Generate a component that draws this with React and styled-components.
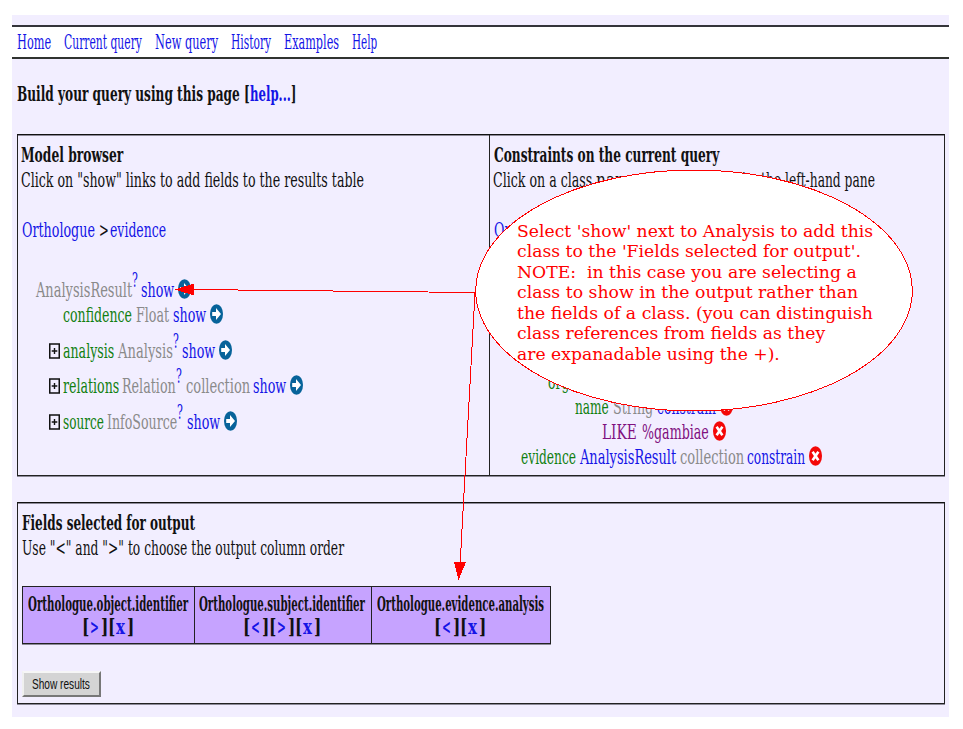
import React, { useLayoutEffect, useRef, useState } from "react";
import styled, { createGlobalStyle } from "styled-components";

const Global = createGlobalStyle`
  * { box-sizing: border-box; }
  html, body { margin: 0; background: #fff; }
  body { width: 963px; height: 729px; overflow: hidden; }
`;

const ink = { link: "#1414e6", green: "#118011", grey: "#8a8a8a", purple: "#80107f", black: "#111" };

const Canvas = styled.div`
  position: relative;
  width: 963px;
  height: 729px;
  overflow: hidden;
  padding: 15px 14px 12px 12px;
  font-family: "DejaVu Serif", serif;
  font-size: 20px;
  line-height: 25px;
  color: ${ink.black};
`;

const Page = styled.main`
  height: 702px;
  padding-top: 10px;
  background: #f2eeff;
`;

const Nav = styled.nav`
  display: flex;
  gap: 13px;
  height: 34px;
  padding: 3px 0 0 5px;
  background: #fff;
  border-top: 2px solid #34343a;
  border-bottom: 2px solid #303330;
`;

const TextBox = styled.span`
  display: block;
  flex: none;
  width: ${(p) => p.$w}px;
  margin-left: ${(p) => p.$ml || 0}px;
  color: ${(p) => ink[p.$tone] || "inherit"};
  white-space: pre;
`;

const Stretch = styled.span`
  display: inline-block;
  transform-origin: 0 50%;
`;

const Heading = styled.h1`
  display: flex;
  height: 25px;
  margin: 23px 0 0 5px;
  font-size: 20px;
  line-height: 25px;
`;

const Panel = styled.section`
  margin: ${(p) => p.$top}px 4px 0 5px;
  height: ${(p) => p.$h}px;
  border: 1px solid #222;
  border-top-color: #111;
  box-shadow: 0 1px 0 #8d8a98, inset 0 1px 0 #8d8a98;
  display: ${(p) => (p.$split ? "grid" : "block")};
  grid-template-columns: 471px 1fr;
`;

const Pane = styled.div`
  padding: 8px 0 0 ${(p) => p.$left || 4}px;
  & + & { border-left: 1px solid #222; }
`;

const Line = styled.div`
  display: flex;
  height: 25px;
  margin-top: ${(p) => p.$top || 0}px;
  padding-left: ${(p) => p.$in || 0}px;
  font-weight: ${(p) => (p.$bold ? 700 : 400)};
`;

const Raised = styled.span`
  transform: translateY(-10px);
`;

const Badge = styled.svg`
  flex: none;
  width: 13px;
  height: 20px;
  margin: 1px 0 0 4px;
`;

const Expander = styled.svg`
  flex: none;
  width: 11px;
  height: 16px;
  margin: 4px 3px 0 0;
`;

const Columns = styled.div`
  display: grid;
  grid-template-columns: 171px 177px 179px;
  width: 529px;
  height: 58px;
  margin-top: 25px;
  background: #c6a3ff;
  border: 1px solid #222;
  box-shadow: 0 1px 0 #8d8a98;
  font-weight: 700;
`;

const Column = styled.div`
  display: flex;
  flex-direction: column;
  align-items: center;
  padding: 5px 2px 0 0;
  line-height: 24px;
  & + & { border-left: 1px solid #222; }
`;

const Controls = styled.div`
  display: flex;
  margin-top: -1px;
`;

const Button = styled.button`
  display: block;
  width: 79px;
  height: 26px;
  margin: 27px 0 0 0;
  padding: 0 0 0 8px;
  text-align: left;
  background: #d4d4d4;
  border: 2px solid;
  border-color: #f6f6f6 #777 #777 #f0f0f0;
  color: #111;
  font: 15px/22px "Liberation Sans", sans-serif;
`;

const Annotation = styled.svg`
  position: absolute;
  left: 0;
  top: 0;
  width: 963px;
  height: 729px;
`;

const Note = styled.div`
  position: absolute;
  left: 517px;
  top: 221.5px;
  color: #f00;
  font-size: 16px;
  line-height: 20.5px;
`;

/* Horizontally condenses or widens its text to fill the given width. */
function Text({ w, ml, tone, children }) {
  const ref = useRef(null);
  const [scale, setScale] = useState(1);
  useLayoutEffect(() => {
    setScale(w / ref.current.offsetWidth);
  }, [w, children]);
  return (
    <TextBox $w={w} $ml={ml} $tone={tone}>
      <Stretch ref={ref} style={{ transform: `scaleX(${scale})` }}>{children}</Stretch>
    </TextBox>
  );
}

const Help = () => <Raised><Text w={6} tone="link">?</Text></Raised>;

const Show = ({ ml = 4 }) => (
  <>
    <Text w={33} ml={ml} tone="link">show</Text>
    <Badge viewBox="0 0 13 20">
      <ellipse cx="6.5" cy="10" rx="6.5" ry="9.8" fill="#07639a" />
      <path d="M2.2 8h3.8V4l5 6-5 6V12H2.2z" fill="#fff" />
    </Badge>
  </>
);

const Remove = () => (
  <Badge viewBox="0 0 13 20">
    <ellipse cx="6.5" cy="10" rx="6.5" ry="9.8" fill="#f40808" />
    <path d="M3.6 5.8l5.8 8.4M9.4 5.8l-5.8 8.4" stroke="#fff" strokeWidth="2.6" />
  </Badge>
);

const Plus = () => (
  <Expander viewBox="0 0 11 16">
    <path d="M.75 1h9.5v14H.75z" fill="none" stroke="#111" strokeWidth="1.5" />
    <path d="M2.7 8h5.6M5.5 5v6" stroke="#111" strokeWidth="1.4" />
  </Expander>
);

const nav = [["Home", 34], ["Current query", 78], ["New query", 63], ["History", 40], ["Examples", 55], ["Help", 25]];

const fields = [
  { name: "Orthologue.object.identifier", w: 160, keys: [">", "x"] },
  { name: "Orthologue.subject.identifier", w: 166, keys: ["<", ">", "x"] },
  { name: "Orthologue.evidence.analysis", w: 167, keys: ["<", "x"] },
];

const note = [
  ["Select 'show' next to Analysis to add this", 356],
  ["class to the 'Fields selected for output'.", 344],
  ["NOTE:  in this case you are selecting a", 340],
  ["class to show in the output rather than", 341],
  ["the fields of a class. (you can distinguish", 355.5],
  ["class references from fields as they", 308],
  ["are expanadable using the +).", 263],
];

export default function App() {
  return (
    <Canvas>
      <Global />
      <Page>
        <Nav>{nav.map(([t, w]) => <Text key={t} w={w} tone="link">{t}</Text>)}</Nav>
        <Heading>
          <Text w={233}>Build your query using this page [</Text>
          <Text w={41} tone="link">help...</Text>
          <Text w={5}>]</Text>
        </Heading>
        <Panel $top={27} $h={342} $split>
          <Pane $left={3}>
            <Line $bold><Text w={102}>Model browser</Text></Line>
            <Line><Text w={343}>Click on "show" links to add fields to the results table</Text></Line>
            <Line $top={25}>
              <Text w={73} ml={1} tone="link">Orthologue</Text>
              <Text w={10} ml={4}>&gt;</Text>
              <Text w={56} ml={1} tone="link">evidence</Text>
            </Line>
            <Line $top={35} $in={15}>
              <Text w={96} tone="grey">AnalysisResult</Text><Help /><Show ml={3} />
            </Line>
            <Line $in={42}>
              <Text w={69} tone="green">confidence</Text>
              <Text w={33} ml={4} tone="grey">Float</Text><Show />
            </Line>
            <Line $top={11} $in={28}>
              <Plus /><Text w={51} tone="green">analysis</Text>
              <Text w={55} ml={4} tone="grey">Analysis</Text><Help /><Show ml={3} />
            </Line>
            <Line $top={10} $in={28}>
              <Plus /><Text w={56} tone="green">relations</Text>
              <Text w={54} ml={3} tone="grey">Relation</Text><Help />
              <Text w={64} ml={4} tone="grey">collection</Text><Show ml={3} />
            </Line>
            <Line $top={11} $in={28}>
              <Plus /><Text w={41} tone="green">source</Text>
              <Text w={70} ml={3} tone="grey">InfoSource</Text><Help /><Show ml={4} />
            </Line>
          </Pane>
          <Pane $left={3}>
            <Line $bold><Text w={225} ml={1}>Constraints on the current query</Text></Line>
            <Line>
              <Text w={99}>Click on a class</Text>
              <Text w={160} ml={4}>name to browse it in</Text>
              <Text w={114} ml={5}>the left-hand pane</Text>
            </Line>
            <Line $top={25}><Text w={73} ml={1} tone="link">Orthologue</Text></Line>
            <Line $top={127} $in={55}><Text w={59} tone="green">organism</Text></Line>
            <Line $in={82}>
              <Text w={34} tone="green">name</Text>
              <Text w={40} ml={4} tone="grey">String</Text>
              <Text w={59} ml={4} tone="link">constrain</Text><Remove />
            </Line>
            <Line $in={109}>
              <Text w={35} tone="purple">LIKE</Text>
              <Text w={67} ml={5} tone="purple">%gambiae</Text><Remove />
            </Line>
            <Line $in={28}>
              <Text w={55} tone="green">evidence</Text>
              <Text w={96} ml={4} tone="link">AnalysisResult</Text>
              <Text w={64} ml={4} tone="grey">collection</Text>
              <Text w={58} ml={3} tone="link">constrain</Text><Remove />
            </Line>
          </Pane>
        </Panel>
        <Panel $top={26} $h={202}>
          <Pane>
            <Line $bold><Text w={173}>Fields selected for output</Text></Line>
            <Line><Text w={322}>{'Use "<" and ">" to choose the output column order'}</Text></Line>
            <Columns>
              {fields.map((f) => (
                <Column key={f.name}>
                  <Text w={f.w}>{f.name}</Text>
                  <Controls>
                    {f.keys.map((k) => (
                      <React.Fragment key={k}>
                        <Text w={7}>[</Text>
                        <Text w={9} ml={1} tone="link">{k}</Text>
                        <Text w={7} ml={2}>]</Text>
                      </React.Fragment>
                    ))}
                  </Controls>
                </Column>
              ))}
            </Columns>
            <Button><Text w={58}>Show results</Text></Button>
          </Pane>
        </Panel>
      </Page>
      <Annotation viewBox="0 0 963 729" shapeRendering="crispEdges">
        <ellipse cx="694" cy="290.5" rx="218.3" ry="120.5" fill="#fff" stroke="#f00" />
        <path d="M475 292.5L190 289.5M475 293L460 566" fill="none" stroke="#f00" />
        <path d="M175 289.5l19-6v12zM454 562h12l-7.5 18z" fill="#f00" />
      </Annotation>
      <Note>{note.map(([t, w]) => <Text key={t} w={w}>{t}</Text>)}</Note>
    </Canvas>
  );
}
